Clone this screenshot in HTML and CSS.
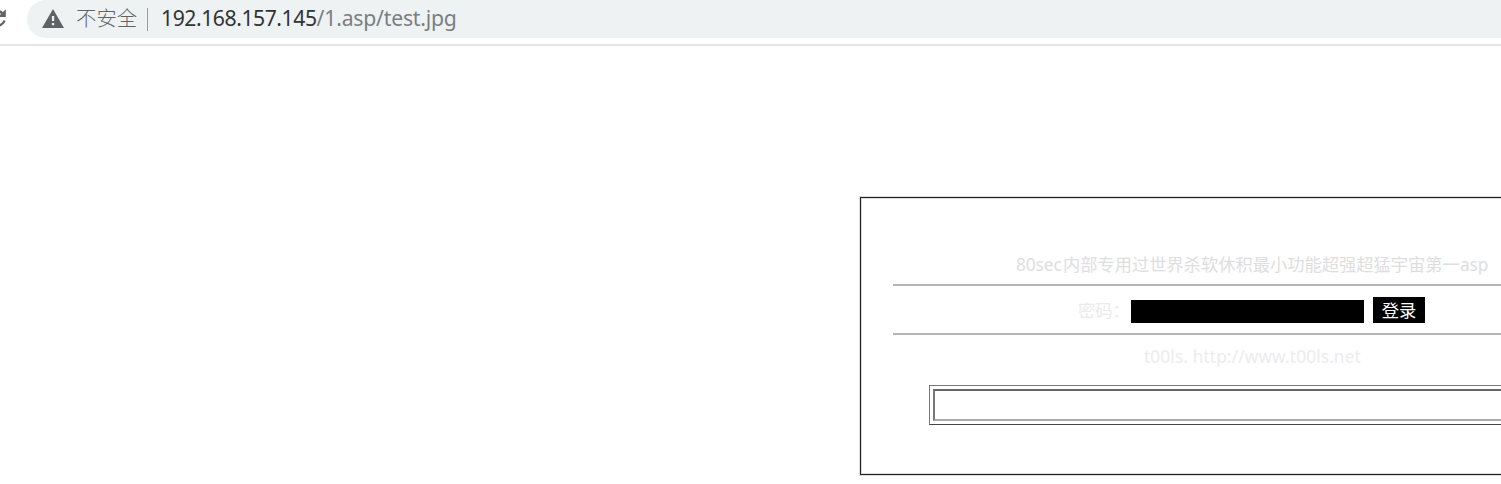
FILE: index.html
```html
<!DOCTYPE html>
<html lang="zh-CN">
<head>
<meta charset="utf-8">
<title>192.168.157.145/1.asp/test.jpg</title>
<link rel="stylesheet" href="styles.css">
</head>
<body>
<header class="toolbar">
  <svg class="reload" width="8" height="38" viewBox="0 0 8 38"><path d="M5.8 9.2V17H-2l3-3C-.3 12.5-2 12-4 12V9.500c2.700 0 5 .8 6.900 2.600z" fill="#5f6368"/><path d="M4.600 20.500C3.700 24-.5 26-4 26" fill="none" stroke="#5f6368" stroke-width="2.300"/></svg>
  <div class="omnibox">
    <svg class="warning" width="22" height="19" viewBox="0 0 22 19"><path d="M11 0 22 19H0z" fill="#5f6368"/><path d="M9.900 7h2.300v5H9.900zM9.900 14h2.300v2.200H9.900z" fill="#eff2f3"/></svg>
    <span class="status">不安全</span>
    <span class="divider"></span>
    <span class="url"><span class="host">192.168.157.145</span><span class="path">/1.asp/test.jpg</span></span>
  </div>
</header>
<main class="page">
  <section class="panel">
    <div class="title"><span class="t-start">80sec</span><span class="t-cjk">内部专用过世界杀软休积最小功能超强超猛宇宙第一</span><span class="t-end">asp</span></div>
    <div class="rule"></div>
    <form class="login">
      <label class="label" for="pw">密码：</label>
      <input class="password" id="pw" type="password">
      <button class="submit" type="button">登录</button>
    </form>
    <div class="rule"></div>
    <div class="credit">t00ls. http://www.t00ls.net</div>
    <div class="frame"><div class="frame-inner"></div></div>
  </section>
</main>
</body>
</html>
```
FILE: styles.css
```css
* { box-sizing: border-box; }
body {
  margin: 0;
  height: 484px;
  overflow: hidden;
  background: #fff;
  font-family: "Noto Sans", "Noto Sans CJK SC", sans-serif;
}
.toolbar {
  display: flex;
  height: 46px;
  border-bottom: 2px solid #e4e5ea;
}
.reload { flex: none; }
.omnibox {
  display: flex;
  align-items: center;
  flex: 1;
  height: 38px;
  margin-left: 19px;
  padding-left: 15px;
  border-radius: 19px 0 0 19px;
  background: #eff2f3;
  white-space: nowrap;
}
.warning { margin-bottom: 2px; }
.status {
  margin-left: 12px;
  width: 62px;
  padding-bottom: 3px;
  font: 300 20.400px/35px "Noto Sans CJK SC", sans-serif;
  color: #5f6368;
}
.divider {
  width: 1px;
  height: 23px;
  margin: 0 13px 0 9px;
  background: #999ca0;
}
.url {
  padding-bottom: 3px;
  font-size: 21.200px;
  line-height: 34px;
}
.host { color: #303338; letter-spacing: -0.460px; }
.path { color: #7a7e83; letter-spacing: -0.210px; }
.page { padding: 151px 0 0 860px; }
.panel {
  height: 278px;
  padding: 54px 0 0 32px;
  border: 1px solid #222;
  border-right: 0;
  box-shadow: 0 0 0 1px #dcdcdc, inset 1px 1px #dcdcdc, inset 0 -1px #dcdcdc;
  white-space: nowrap;
}
.title {
  display: flex;
  height: 32px;
  padding-left: 123px;
  line-height: 26px;
  font-size: 17.300px;
  letter-spacing: -0.100px;
  color: #dedede;
}
.t-start { width: 47px; }
.t-cjk {
  width: 397px;
  font-size: 17.260px;
  letter-spacing: 0;
}
.rule {
  height: 2px;
  background: #b5b5b5;
}
.login {
  display: flex;
  height: 47px;
  margin: 0;
  padding: 11px 0 0 185px;
}
.label {
  width: 53px;
  font-size: 17.300px;
  line-height: 27px;
  color: #ebebeb;
}
.password {
  width: 233px;
  height: 23px;
  margin: 3px 9px 0 0;
  padding: 0;
  border: 0;
  border-radius: 0;
  background: #000;
}
.submit {
  width: 52px;
  height: 26px;
  padding: 0;
  border: 0;
  background: #000;
  color: #fff;
  font: 17.300px/26px "Noto Sans CJK SC", sans-serif;
}
.credit {
  height: 50px;
  padding-left: 251px;
  font-size: 17.300px;
  letter-spacing: 0.110px;
  line-height: 44px;
  color: #ececee;
}
.frame {
  height: 40px;
  margin-left: 36px;
  padding: 3px 0 3px 3px;
  border: 1px solid #777;
  border-right: 0;
  border-bottom-color: #444;
}
.frame-inner {
  height: 32px;
  border: solid;
  border-width: 2px 0 2px 2px;
  border-color: #666 #aaa #aaa #777;
}
```
